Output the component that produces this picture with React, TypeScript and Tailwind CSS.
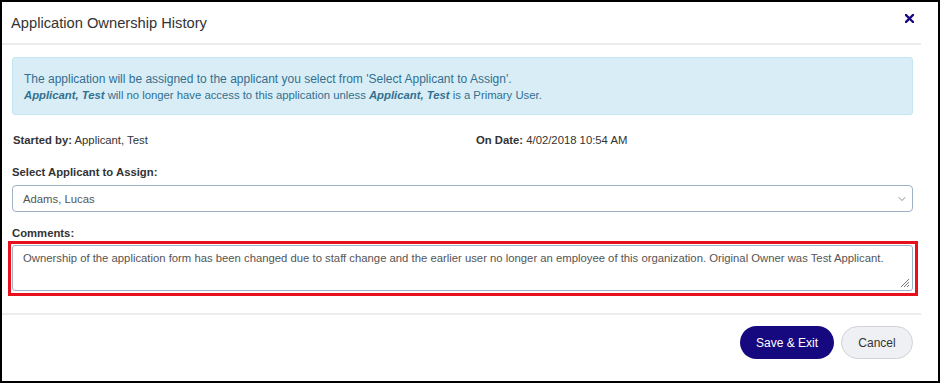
import { ChevronDown } from 'lucide-react';

export default function App() {
  const font = { fontFamily: '"Liberation Sans", Arial, sans-serif' };

  return (
    <div className="w-[943px] h-[385px] bg-white" style={font}>
      <div className="w-[940px] h-[383px] border-2 border-black bg-white flex flex-col">
        <div className="w-[919px] flex flex-col">
          {/* Header */}
          <div className="h-[43px] flex items-center justify-between pl-[9px] pr-[6px] pt-[1px] border-b-2 border-[#ececec]">
            <h2 className="text-[14.7px] text-[#333] leading-none">Application Ownership History</h2>
            <button className="self-start mt-[9px] w-[12px] h-[12px] flex items-center justify-center">
              <svg width="9" height="9" viewBox="0 0 9 9">
                <path d="M1 1 L8 8 M8 1 L1 8" stroke="#1a0a80" strokeWidth="2.4" strokeLinecap="square" />
              </svg>
            </button>
          </div>

          {/* Body */}
          <div className="pl-[10px] pr-[8px] pt-[12px] pb-[22px] text-[11.3px] leading-[16px] text-[#333]">
            <div className="bg-[#d9edf7] border border-[#c4e6f2] rounded-[3px] text-[#31708f] pl-[11px] pt-[13px] pb-[11px]">
              <p className="text-[12px]">The application will be assigned to the applicant you select from 'Select Applicant to Assign'.</p>
              <p>
                <b><i>Applicant, Test</i></b> will no longer have access to this application unless{' '}
                <b><i>Applicant, Test</i></b> is a Primary User.
              </p>
            </div>

            <div className="mt-[17px] grid grid-cols-[462px_1fr] pl-[1px]">
              <div><b>Started by:</b> Applicant, Test</div>
              <div className="pl-[1px]"><b>On Date:</b> 4/02/2018 10:54 AM</div>
            </div>

            <div className="mt-[16px] font-bold">Select Applicant to Assign:</div>
            <div className="mt-[5px] h-[27px] border border-[#9fb1c6] rounded-[4px] flex items-center justify-between pl-[10px] pr-[4px] text-[#555]">
              <span>Adams, Lucas</span>
              <ChevronDown size={12} strokeWidth={1.5} className="text-[#666]" />
            </div>

            <div className="mt-[13px] font-bold">Comments:</div>
            <div className="relative mt-[4px]">
              <div className="absolute -left-[4px] -right-[5px] -top-[4px] -bottom-[5px] border-[3px] border-[#e8101c]" />
              <div className="relative h-[46px] border border-[#9fb1c6] rounded-[3px] pl-[10px] pt-[4px] text-[#555]">
                Ownership of the application form has been changed due to staff change and the earlier user no longer an employee of this organization. Original Owner was Test Applicant.
                <svg className="absolute right-[2px] bottom-[2px]" width="10" height="10" viewBox="0 0 10 10">
                  <path d="M9 1 L1 9 M9 4 L4 9 M9 7 L7 9" stroke="#777" strokeWidth="1" />
                </svg>
              </div>
            </div>
          </div>

          {/* Footer */}
          <div className="border-t-2 border-[#ececec] flex justify-end gap-[7px] pt-[11px] pr-[8px]">
            <button className="h-[33px] w-[94px] rounded-full bg-[#16087e] text-white text-[12px]">Save &amp; Exit</button>
            <button className="h-[33px] w-[72px] rounded-full bg-[#eef0f3] border border-[#cfd3d8] text-[#333] text-[12px]">Cancel</button>
          </div>
        </div>
      </div>
    </div>
  );
}
